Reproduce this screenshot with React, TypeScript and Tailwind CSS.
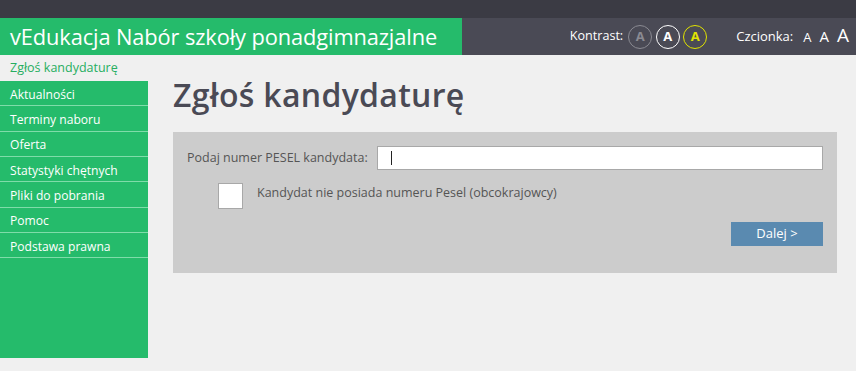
const menu = [
  "Aktualności",
  "Terminy naboru",
  "Oferta",
  "Statystyki chętnych",
  "Pliki do pobrania",
  "Pomoc",
  "Podstawa prawna",
];

const font = { fontFamily: '"Open Sans", "Noto Sans", sans-serif' };

export default function App() {
  return (
    <div className="w-[856px] h-[371px] bg-[#f0f0f0] overflow-hidden" style={font}>
      {/* top strip */}
      <div className="h-[18px] bg-[#3b3b44]" />

      {/* header */}
      <div className="flex h-[37px]">
        <div className="w-[462px] bg-[#25bb6b] flex items-center px-[10px]">
          <span className="text-white text-[21.8px] leading-none tracking-[-0.1px]">
            vEdukacja Nabór szkoły ponadgimnazjalne
          </span>
        </div>
        <div className="flex-1 bg-[#4a4a55] flex items-center justify-end pr-[7px] text-white">
          <span className="text-[12.6px] mr-[5px]">Kontrast:</span>
          <div className="flex gap-[3.5px]">
            <span className="w-[24px] h-[24px] rounded-full border border-[#8a8a92] text-[#8a8a92] text-[13px] font-bold flex items-center justify-center">
              A
            </span>
            <span className="w-[24px] h-[24px] rounded-full border border-white text-white text-[13px] font-bold flex items-center justify-center">
              A
            </span>
            <span className="w-[24px] h-[24px] rounded-full border border-[#e1e400] text-[#e1e400] text-[13px] font-bold flex items-center justify-center">
              A
            </span>
          </div>
          <span className="text-[13px] ml-[29px] mr-[10px]">Czcionka:</span>
          <div className="flex items-baseline gap-[8px]">
            <span className="text-[13px]">A</span>
            <span className="text-[15px]">A</span>
            <span className="text-[19px] leading-none">A</span>
          </div>
        </div>
      </div>

      <div className="flex">
        {/* sidebar */}
        <div className="w-[148px] shrink-0">
          <div className="h-[26px] flex items-center pl-[10px] text-[12.5px] text-[#27ae60]">
            Zgłoś kandydaturę
          </div>
          <ul className="bg-[#25bb6b] h-[277px]">
            {menu.map((m) => (
              <li
                key={m}
                className="h-[25.33px] flex items-center pt-[3px] pl-[10px] text-[12.1px] text-white border-b border-[#7fdca9]"
              >
                {m}
              </li>
            ))}
          </ul>
        </div>

        {/* content */}
        <div className="ml-[25px] w-[664px]">
          <h1 className="text-[32px] text-[#4a4a55] font-semibold leading-none mt-[24px] mb-[21px] tracking-[0.3px]">
            Zgłoś kandydaturę
          </h1>
          <div className="bg-[#cccccc] h-[141px] pt-[14px] pl-[14px] pr-[14px]">
            <div className="flex items-center">
              <label className="text-[12.5px] text-[#555] w-[190px]">Podaj numer PESEL kandydata:</label>
              <div className="flex-1 h-[24px] bg-white border border-[#a8a8a8] flex items-center pl-[13px]">
                <span className="w-px h-[14px] bg-[#222]" />
              </div>
            </div>
            <div className="flex items-start mt-[13px] pl-[31px]">
              <div className="w-[25px] h-[26px] bg-white border border-[#a8a8a8]" />
              <span className="ml-[14px] mt-[1px] text-[12.5px] text-[#555]">
                Kandydat nie posiada numeru Pesel (obcokrajowcy)
              </span>
            </div>
            <div className="flex justify-end mt-[13px]">
              <button className="w-[92px] h-[24px] bg-[#5a8ab0] text-white text-[13px] flex items-center justify-center">
                Dalej &gt;
              </button>
            </div>
          </div>
        </div>
      </div>
    </div>
  );
}
